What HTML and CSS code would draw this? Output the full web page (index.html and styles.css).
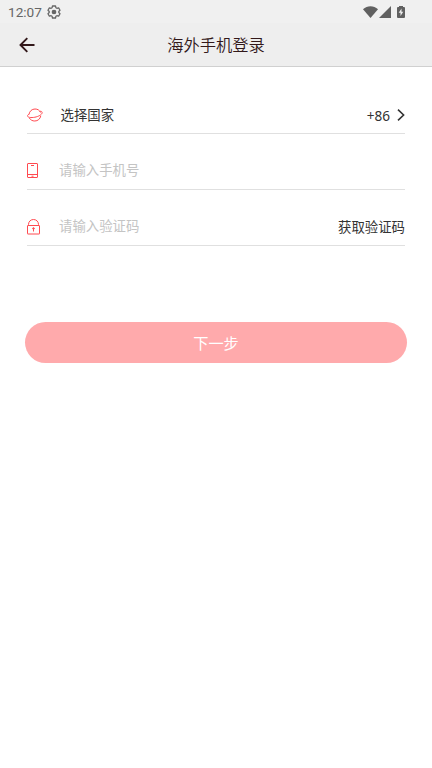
FILE: index.html
```html
<!DOCTYPE html>
<html lang="zh-CN">
<head>
    <meta charset="UTF-8">
    <meta name="viewport" content="width=device-width, initial-scale=1.0">
    <title>海外手机登录</title>
    <link rel="stylesheet" href="styles.css">
</head>
<body>
    <div class="status-bar">
        <span class="time">12:07</span>
        <svg class="gear" width="14" height="14" viewBox="0 0 14 14" fill="none" stroke="#666" stroke-width="1.3" stroke-linejoin="round">
            <path d="M5.5 1h3l.4 1.7 1 .6 1.7-.5 1.4 2.5L11.8 6.500v1l1.200 1.200-1.400 2.500-1.700-.5-1 .6L8.500 13h-3l-.4-1.700-1-.6-1.700.5L1 8.700l1.200-1.200v-1L1 5.300l1.400-2.500 1.700.5 1-.6z"/>
            <circle cx="7" cy="7" r="1.700" fill="#666"/>
        </svg>
        <div class="status-icons">
            <svg width="15" height="12" viewBox="0 0 15 12" fill="#606060"><path d="M0 3.200C4.300-.8 10.700-.8 15 3.200L7.500 12z"/></svg>
            <svg width="12" height="12" viewBox="0 0 12 12" fill="#606060"><path d="M12 0v12H0z"/></svg>
            <svg class="battery" width="8" height="12" viewBox="0 0 8 12">
                <path fill="#606060" d="M2 0h4v1h1q1 0 1 1v9q0 1-1 1H1q-1 0-1-1V2q0-1 1-1h1z"/>
                <path fill="#eee" d="M4.500 2.500 1.700 6.800h1.800V10L6.300 5.700H4.500z"/>
            </svg>
        </div>
    </div>

    <header class="header">
        <svg class="back" width="16" height="16" viewBox="0 0 16 16" fill="none" stroke="#32181a" stroke-width="1.900">
            <path d="M15.500 8H1.800M8.300 1.200 1.500 8l6.800 6.800"/>
        </svg>
        <h1>海外手机登录</h1>
    </header>

    <main class="login">
        <div class="row">
            <svg class="icon" width="16" height="16" viewBox="0 0 16 16" fill="none" stroke="#ff4a50" stroke-width="1">
                <path d="M2 7.500C2.500 4.200 4.800 2 8 2c2.600 0 4.600 1.200 5.500 3.500M2.300 11C3.600 13 5.400 14 7.800 14c3 0 5.400-2 6-5.200"/>
                <path d="M2 7.200C.8 7.700.3 8.500.6 9.300c.7 1.500 5 1.600 8.600.6 3.700-1 6.300-3 5.900-4.600-.2-.8-1-1.200-2.300-1"/>
            </svg>
            <span class="country">选择国家</span>
            <span class="code">+86</span>
            <svg class="chevron" width="8" height="12" viewBox="0 0 8 12" fill="none" stroke="#333" stroke-width="1.600"><path d="M1 .7 6.600 6 1 11.300"/></svg>
        </div>
        <div class="row">
            <svg class="icon" width="16" height="16" viewBox="0 0 16 16" fill="none" stroke="#ff4a50" stroke-width="1">
                <rect x=".5" y=".5" width="10" height="14" rx=".5"/>
                <path d="M.5 11.500h10M4 2.500h3M4.500 13.200h2"/>
            </svg>
            <input class="field" type="tel" placeholder="请输入手机号">
        </div>
        <div class="row">
            <svg class="icon" width="16" height="16" viewBox="0 0 16 16" fill="none" stroke="#ff4a50" stroke-width="1">
                <rect x=".5" y="6.500" width="12" height="8.500" rx=".3"/>
                <path d="M1.500 6.500V5.500C1.500 2.500 3.700.5 6.500.5s5 2 5 5v1"/>
                <path d="M6.500 9.500v3"/>
                <circle cx="6.500" cy="9.500" r=".8" fill="#ff4a50"/>
            </svg>
            <input class="field" type="text" placeholder="请输入验证码">
            <button class="get-code">获取验证码</button>
        </div>
        <button class="next">下一步</button>
    </main>
</body>
</html>
```

FILE: styles.css
```css
* {
    box-sizing: border-box;
}
body {
    margin: 0;
    background: #fff;
    color: #333;
    font-family: Roboto, "Noto Sans CJK SC", sans-serif;
    font-size: 13.4px;
}
svg {
    display: block;
    flex-shrink: 0;
}
button,
input {
    border: none;
    padding: 0;
    background: none;
    font: inherit;
    color: inherit;
}
.status-bar {
    display: flex;
    align-items: center;
    height: 23px;
    padding: 0 27px 0 8px;
    background: #f0f0f0;
    color: #666;
}
.time {
    font-size: 13.6px;
    line-height: 23px;
    padding-top: 1px;
}
.gear {
    margin-left: 5px;
}
.status-icons {
    display: flex;
    align-items: center;
    gap: 1px;
    margin-left: auto;
}
.battery {
    margin-left: 5px;
}
.header {
    display: grid;
    grid-template-columns: 40px 1fr 40px;
    align-items: center;
    height: 44px;
    background: #eee;
    border-bottom: 1px solid #d0d0d0;
}
.back {
    margin-left: 19px;
}
.header h1 {
    margin: 0;
    padding-bottom: 2px;
    color: #32181a;
    font-size: 16.3px;
    font-weight: 350;
    text-align: center;
}
.login {
    padding: 11px 25px 0;
}
.row {
    display: flex;
    align-items: center;
    height: 56px;
    margin: 0 2px;
    padding-top: 18px;
    border-bottom: 1px solid #e0e0e0;
}
.icon {
    margin-right: 16px;
}
.country {
    margin-left: 1.5px;
    padding-bottom: 2px;
}
.code {
    margin-left: auto;
    padding-top: 1px;
    font-family: "Noto Sans", sans-serif;
    font-size: 13.6px;
}
.chevron {
    margin-left: 7px;
}
.field {
    flex: 1;
    min-width: 0;
    outline: none;
}
.field::placeholder {
    color: #c4c4c4;
    opacity: 1;
}
.get-code {
    padding-bottom: 2px;
}
.next {
    width: 100%;
    height: 41px;
    margin-top: 76px;
    padding-bottom: 2px;
    border-radius: 21px;
    background: #ffaaac;
    color: #fff;
    font-size: 15.2px;
}
```
